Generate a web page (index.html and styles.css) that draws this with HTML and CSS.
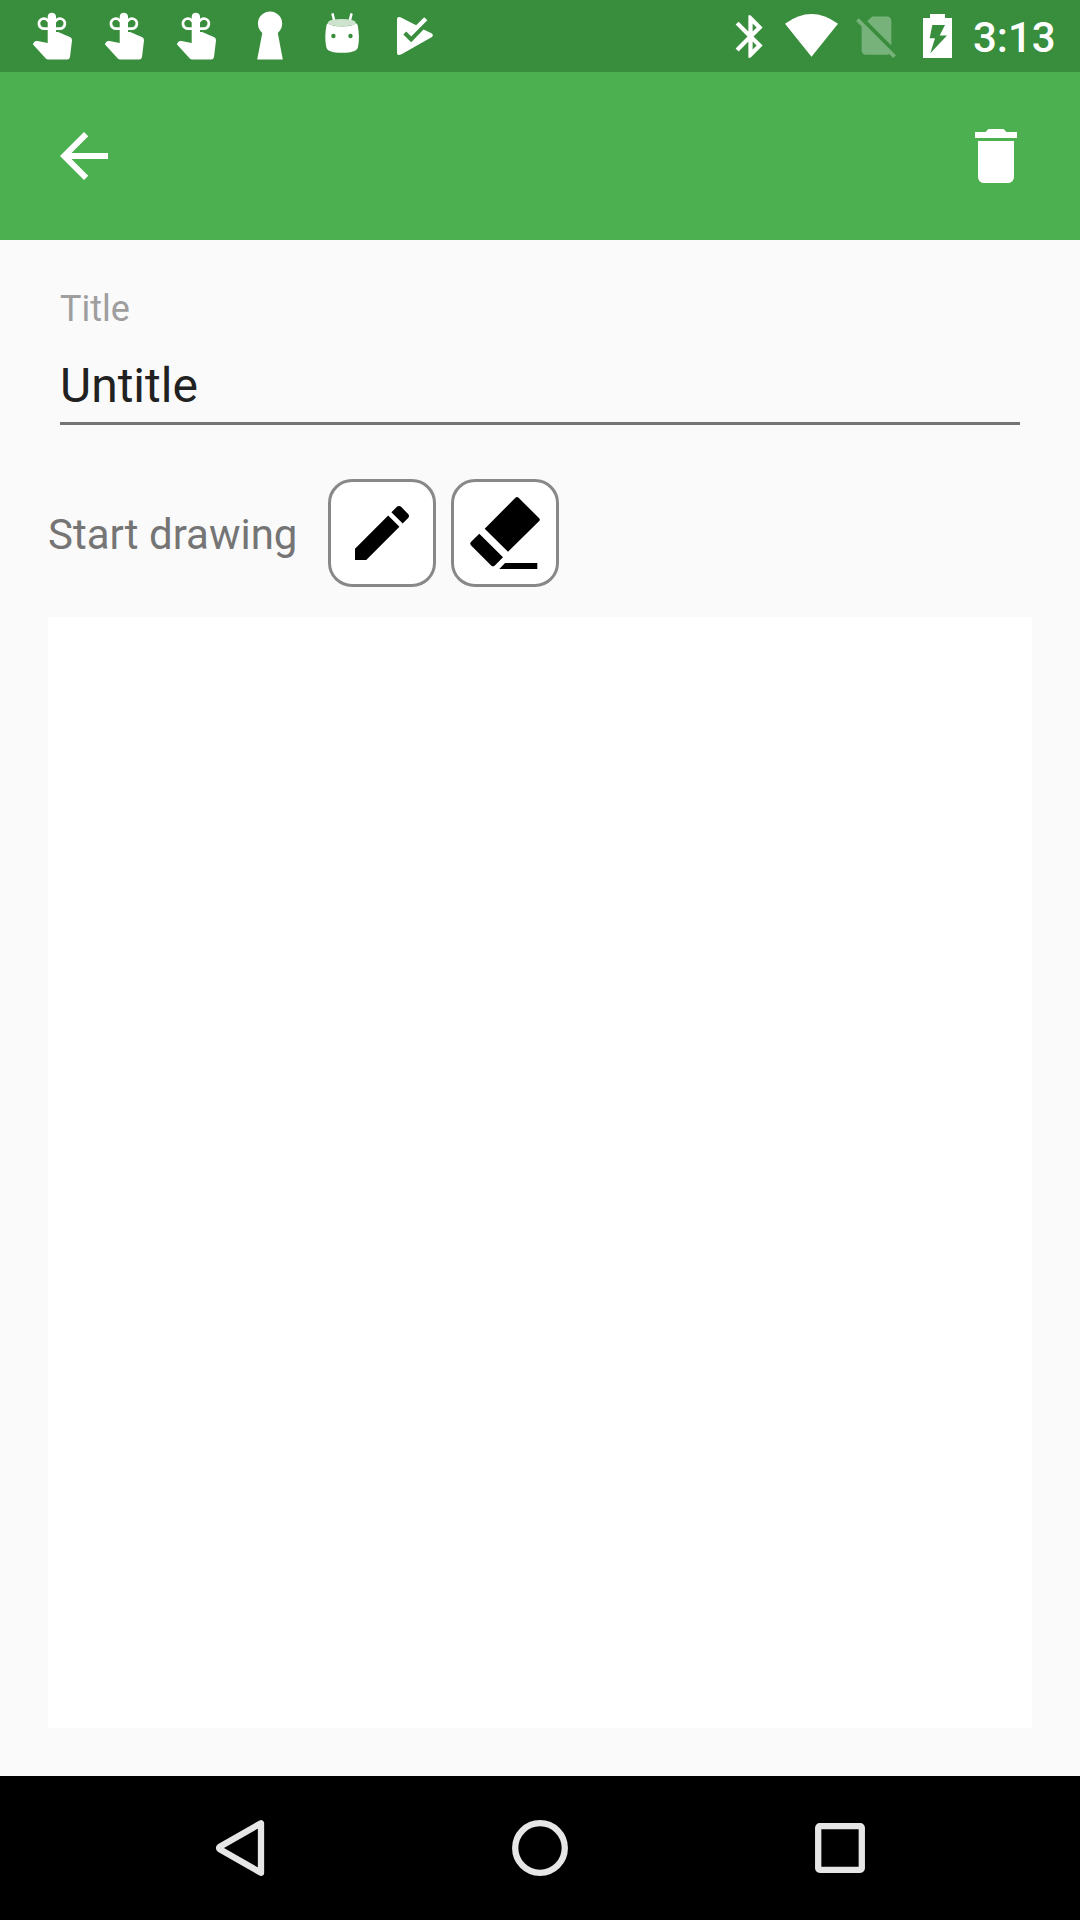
FILE: index.html
```html
<!DOCTYPE html>
<html lang="en">
<head>
<meta charset="utf-8">
<title>Untitle</title>
<link rel="stylesheet" href="styles.css">
</head>
<body>
<svg class="defs" aria-hidden="true">
  <symbol id="reminder" viewBox="0 0 72 72">
    <path d="M29.7 16.8a4.15 4.15 0 0 1 8.3 0V32h2.2L52.4 37.3Q54.3 38.4 54 40.6L52 57Q51.6 59.6 49 59.6H30.2Q28.8 59.6 27.8 58.6L14.8 44.2 16.2 42Q17.3 40.8 19.4 41.1L29.7 43Z"/>
    <path d="M31 28.6H26a5 5 0 1 1 4.6-6.8M37 28.6H41.8a5 5 0 1 0-4.6-6.8" fill="none" stroke="currentColor" stroke-width="2.8"/>
  </symbol>
</svg>
<div class="screen">
  <header class="status">
    <div class="notifications">
      <svg class="cell"><use href="#reminder"/></svg>
      <svg class="cell"><use href="#reminder"/></svg>
      <svg class="cell"><use href="#reminder"/></svg>
      <svg class="cell" viewBox="0 0 72 72"><path d="M28.3 32.9A12.1 12.1 0 1 1 43.8 32.9L48.8 59.5H23.2Z"/></svg>
      <svg class="cell" viewBox="0 0 72 72">
        <path d="M26.4 13.4L28.5 21.8M45.6 13.4L43.5 21.8" fill="none" stroke="currentColor" stroke-width="2.5"/>
        <path d="M22 23C25 27.5 47 27.5 50 23L51.7 25Q54 37.5 52 47Q51.2 52.8 36 52.8Q20.8 52.8 20.3 47Q18.2 37.5 20.5 25Z"/>
        <ellipse class="rim" cx="35.8" cy="22.7" rx="14" ry="3.7"/>
        <circle class="hole" cx="27.4" cy="36" r="2.2"/><circle class="hole" cx="44.5" cy="36" r="2.2"/>
      </svg>
      <svg class="cell" viewBox="0 0 72 72"><path d="M19 19Q19 17 21 17 22 16.9 23 17.4L38.2 25.2 46.2 17.2 49.3 20.3 33.2 36.4 28.3 31.5 25.3 34.5 33.2 42.2 45.5 29.4 53.5 33.3Q56.3 35.3 53.5 37.3L24 54Q19 56.5 19 53Z"/></svg>
    </div>
    <div class="system">
      <svg class="bluetooth" viewBox="0 0 24 24"><path d="M17.71 7.71L12 2h-1v7.59L6.41 5 5 6.41 10.59 12 5 17.59 6.41 19 11 14.41V22h1l5.71-5.71-4.3-4.29 4.3-4.29zM13 5.83l1.88 1.88L13 9.59V5.83zm1.88 10.46L13 18.17v-3.76l1.88 1.88z"/></svg>
      <svg class="wifi" viewBox="0 0 53 43"><path d="M0 9.7Q26.5-9.7 53 9.7L26.5 42.7Z"/></svg>
      <svg class="sim" viewBox="0 0 24 24"><path d="M18.99 5c0-1.1-.89-2-1.99-2h-7L7.66 5.34 19 16.68 18.99 5zM3.65 3.88L2.38 5.15 5 7.77V19c0 1.1.9 2 2 2h10.01c.35 0 .67-.1.96-.26l1.88 1.88 1.27-1.27L3.65 3.88z"/></svg>
      <svg class="battery" viewBox="0 0 29 44"><path fill-rule="evenodd" d="M0 4H7V0H22V4H29V44H0ZM9.3 11L6.7 24.3H12L7.3 39.3 24 21.5H16.7L22 11Z"/></svg>
      <span class="time">3:13</span>
    </div>
  </header>
  <nav class="appbar">
    <svg class="icon" viewBox="0 0 24 24"><path d="M20 11H7.83l5.59-5.59L12 4l-8 8 8 8 1.41-1.41L7.83 13H20v-2z"/></svg>
    <svg class="icon" viewBox="0 0 24 24"><path d="M6 19c0 1.1.9 2 2 2h8c1.1 0 2-.9 2-2V7H6v12zM19 4h-3.500l-1-1h-5l-1 1H5v2h14V4z"/></svg>
  </nav>
  <main class="content">
    <section class="field">
      <div class="label">Title</div>
      <div class="value">Untitle</div>
    </section>
    <section class="tools">
      <span class="hint">Start drawing</span>
      <div class="tool"><svg class="icon" viewBox="0 0 24 24"><path d="M3 17.25V21h3.75L17.81 9.94l-3.75-3.75L3 17.25zM20.71 7.04c.39-.39.39-1.02 0-1.41l-2.34-2.34c-.39-.39-1.02-.39-1.41 0l-1.83 1.83 3.75 3.75 1.83-1.83z"/></svg></div>
      <div class="tool"><svg class="icon" viewBox="0 0 72 72"><path d="M46.4.7Q48-.7 49.6.7L70.2 21.3Q71.5 22.7 70.2 24.1L39 54.7 15.7 31.7ZM10.3 36.7L34 60.3 25.6 68.7Q24 70 22.4 68.7L1.9 48.2Q.6 46.5 1.9 44.9ZM36 66H68.3V72H30.3Z"/></svg></div>
    </section>
    <section class="canvas"></section>
  </main>
  <footer class="navbar">
    <svg class="icon" viewBox="0 0 72 72"><path d="M57 11.2V60.8L15.8 37.2Q14.2 36 15.8 34.8Z"/></svg>
    <svg class="icon" viewBox="0 0 72 72"><circle cx="36" cy="36" r="24.8"/></svg>
    <svg class="icon" viewBox="0 0 72 72"><rect x="14.2" y="14.2" width="43.6" height="43.6" rx="1.5"/></svg>
  </footer>
</div>
</body>
</html>
```
FILE: styles.css
```css
* { box-sizing: border-box; }
body { margin: 0; font-family: Roboto, sans-serif; }
svg { display: block; flex: none; fill: currentColor; }
.defs { position: absolute; width: 0; height: 0; }
.screen { width: 1080px; height: 1920px; display: flex; flex-direction: column; background: #fafafa; }
.icon, .cell { width: 72px; height: 72px; }

.status { height: 72px; padding: 0 25px 0 18px; display: flex; justify-content: space-between; background: #388e3c; color: #fff; }
.notifications, .system { display: flex; }
.rim { fill: #cde3ce; }
.hole { fill: #388e3c; }
.bluetooth { width: 51px; height: 51px; margin-top: 11px; }
.wifi { width: 53px; height: 43px; margin: 14px 13px 0 9px; }
.sim { width: 51px; height: 51px; margin-top: 10.4px; opacity: .32; }
.battery { width: 29px; height: 44px; margin: 14px 21px 0 21px; }
.time { width: 82px; margin-top: 13px; font-size: 42px; line-height: 49px; font-weight: 500; text-align: right; }

.appbar { height: 168px; padding: 48px; display: flex; justify-content: space-between; background: #4caf50; color: #fff; }

.content { flex: 1; padding: 48px; display: flex; flex-direction: column; }
.field { margin: 0 12px; height: 137px; border-bottom: 3px solid #747474; }
.label { font-size: 36px; line-height: 42px; color: #9e9e9e; }
.value { margin-top: 28px; font-size: 48px; line-height: 56px; color: #212121; }
.tools { margin-top: 54px; display: flex; align-items: center; gap: 15px; }
.hint { width: 265px; padding-top: 2px; font-size: 42px; line-height: 49px; color: #757575; white-space: nowrap; }
.tool { width: 108px; height: 108px; display: grid; place-items: center; border: 3px solid #888; border-radius: 24px; background: #fff; color: #000; }
.canvas { margin-top: 30px; flex: 1; background: #fff; }

.navbar { height: 144px; padding: 0 90px; display: grid; grid-template-columns: repeat(3, 300px); place-items: center; background: #000; }
.navbar .icon { fill: none; stroke: #e6e6e6; stroke-width: 6.3; stroke-linejoin: round; }
```
